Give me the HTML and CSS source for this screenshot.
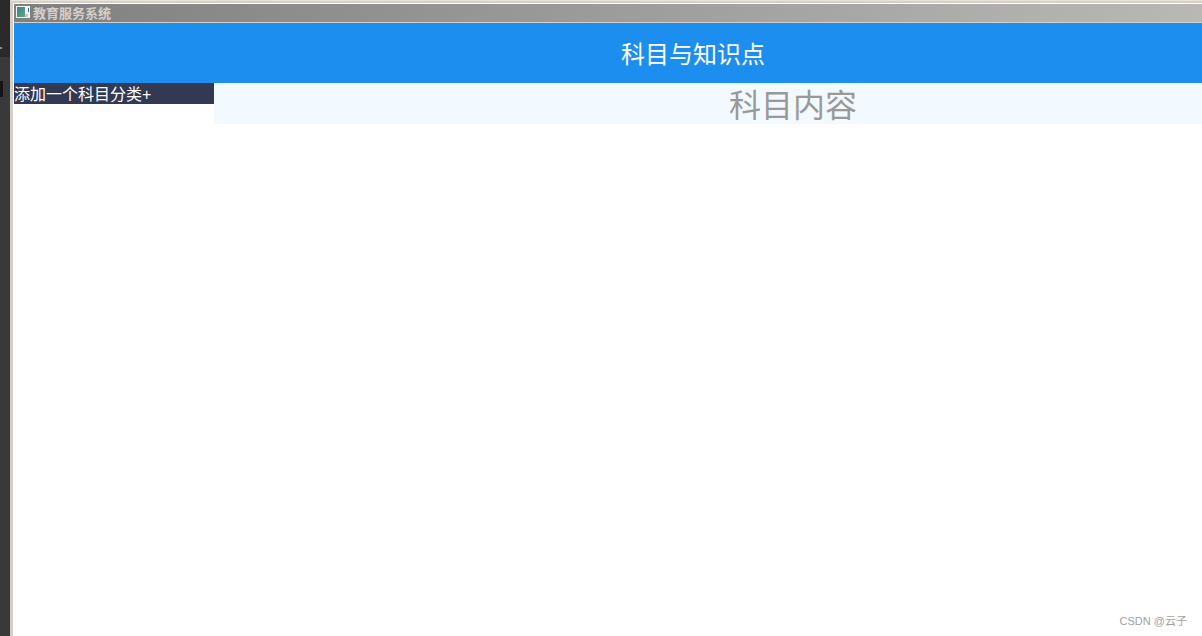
FILE: index.html
```html
<!DOCTYPE html>
<html>
<head>
    <meta charset="utf-8">
    <title>教育服务系统</title>
    <link rel="stylesheet" href="styles.css">
</head>
<body>
    <div class="desktop">
        <div class="desktop-mark"></div>
        <div class="desktop-panel">
            <div class="desktop-panel-dark"></div>
        </div>
    </div>

    <div class="window">
        <div class="title-bar">
            <svg class="title-icon" width="14" height="12" viewBox="0 0 14 12">
                <defs>
                    <linearGradient id="icon-fill" x1="0" y1="0" x2="1" y2="1">
                        <stop offset="0" stop-color="#3a7f9c"/>
                        <stop offset="1" stop-color="#62a874"/>
                    </linearGradient>
                </defs>
                <rect width="14" height="12" fill="#f2f4f4"/>
                <rect x="1" y="1" width="8" height="10" fill="url(#icon-fill)"/>
                <rect x="9" y="8" width="3" height="3" fill="#c6caca"/>
                <rect x="12" y="2" width="1" height="4" fill="#2f6f8f"/>
            </svg>
            <span class="title-text">教育服务系统</span>
        </div>

        <div class="page">
            <div class="header">科目与知识点</div>

            <div class="main">
                <div class="sidebar">
                    <div class="add-subject">添加一个科目分类+</div>
                </div>
                <div class="content">
                    <div class="content-title">科目内容</div>
                </div>
            </div>
        </div>
    </div>

    <div class="watermark">CSDN @云子</div>
</body>
</html>
```

FILE: styles.css
```css
html, body {
    height: 100%;
}

body {
    margin: 0;
    background: #ffffff;
    display: flex;
    overflow: hidden;
    font-family: "Liberation Sans", "Noto Sans CJK SC", sans-serif;
}

.desktop {
    width: 10px;
    flex-shrink: 0;
    background: #2a2a2b;
    padding-top: 47px;
    box-sizing: border-box;
}

.desktop-mark {
    width: 2px;
    height: 2px;
    margin-bottom: 8px;
    background: #8a8a8a;
}

.desktop-panel {
    height: calc(100% - 10px);
    padding-top: 24px;
    box-sizing: border-box;
    background: #39393b;
}

.desktop-panel-dark {
    width: 3px;
    height: 16px;
    background: #151515;
}

.window {
    flex: 1;
    min-width: 0;
    display: flex;
    flex-direction: column;
    overflow: hidden;
    border-top: 1px solid #e8e4da;
    border-left: 3px solid #d4d0c8;
    box-shadow: inset 0 2px 0 #d4d0c8;
    padding-top: 3px;
    padding-left: 1px;
    background: #ffffff;
}

.title-bar {
    height: 19px;
    flex-shrink: 0;
    display: flex;
    align-items: center;
    gap: 3px;
    padding: 0 0 2px 2px;
    box-sizing: border-box;
    background: linear-gradient(to right, #808080, #b9b8b5);
    border-bottom: 1px solid #d4d0c8;
}

.title-icon {
    flex-shrink: 0;
}

.title-text {
    color: #d4d0c8;
    font-size: 13px;
    font-weight: bold;
}

/* the page is wider than the window, its right side gets cut off */
.page {
    width: 1358px;
    flex: 1;
    display: flex;
    flex-direction: column;
}

.header {
    height: 60px;
    flex-shrink: 0;
    display: flex;
    align-items: center;
    justify-content: center;
    padding-bottom: 2px;
    box-sizing: border-box;
    background: #1c8ef0;
    color: #ffffff;
    font-size: 24px;
}

.main {
    flex: 1;
    display: flex;
    align-items: flex-start;
}

.sidebar {
    width: 200px;
    flex-shrink: 0;
}

.add-subject {
    height: 21px;
    line-height: 23px;
    background: #333853;
    color: #ffffff;
    font-size: 16px;
}

.content {
    flex: 1;
    background: #f2f9ff;
}

.content-title {
    height: 41px;
    line-height: 46px;
    text-align: center;
    color: #999999;
    font-size: 32px;
}

.watermark {
    position: absolute;
    right: 15px;
    bottom: 8px;
    color: #a0a0a0;
    font-size: 11px;
}
```
